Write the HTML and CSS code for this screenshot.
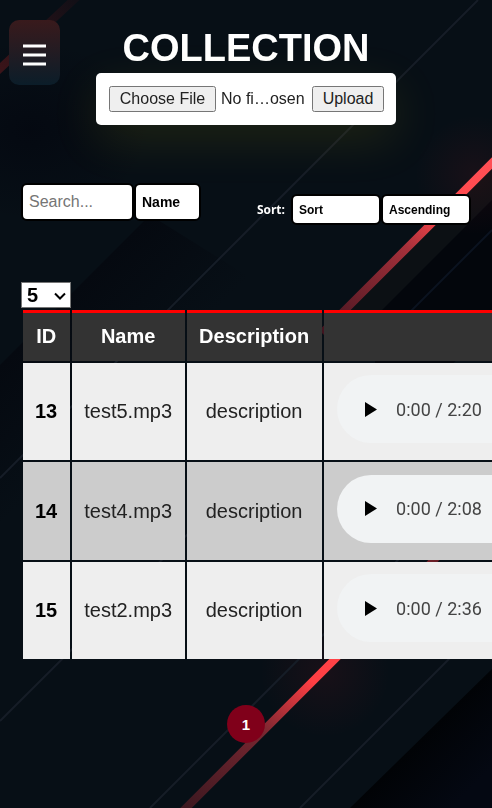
FILE: index.html
```html
<!DOCTYPE html>
<html lang="en">
<head>
<meta charset="utf-8">
<meta name="viewport" content="width=device-width, initial-scale=1">
<title>Collection</title>
<link rel="stylesheet" href="styles.css">
</head>
<body>
<svg class="backdrop" viewBox="0 0 492 808" preserveAspectRatio="xMidYMid slice" aria-hidden="true">
  <defs>
    <linearGradient id="beamTop" gradientUnits="userSpaceOnUse" x1="492" y1="163" x2="322" y2="333">
      <stop offset="0" stop-color="#ff4f55"/><stop offset=".3" stop-color="#ff474b"/><stop offset=".5" stop-color="#a5303a"/><stop offset="1" stop-color="#40141f"/>
    </linearGradient>
    <linearGradient id="beamLow" gradientUnits="userSpaceOnUse" x1="440" y1="554" x2="185" y2="809">
      <stop offset="0" stop-color="#5d1a22"/><stop offset=".35" stop-color="#ff4549"/><stop offset=".5" stop-color="#ff3e43"/><stop offset=".7" stop-color="#762630"/><stop offset="1" stop-color="#3c1820"/>
    </linearGradient>
    <linearGradient id="beamDim" gradientUnits="userSpaceOnUse" x1="0" y1="70" x2="75" y2="0">
      <stop offset="0" stop-color="#3b1419"/><stop offset="1" stop-color="#120f16"/>
    </linearGradient>
    <linearGradient id="shade" gradientUnits="userSpaceOnUse" x1="420" y1="740" x2="470" y2="790">
      <stop offset="0" stop-color="#010306"/><stop offset="1" stop-color="#040812"/>
    </linearGradient>
    <linearGradient id="shadeLeft" gradientUnits="userSpaceOnUse" x1="70" y1="295" x2="150" y2="375">
      <stop offset="0" stop-color="#050910"/><stop offset="1" stop-color="#070f16"/>
    </linearGradient>
    <radialGradient id="glow"><stop offset="0" stop-color="#ff2030" stop-opacity=".07"/><stop offset="1" stop-color="#ff2030" stop-opacity="0"/></radialGradient>
    <radialGradient id="dusk"><stop offset="0" stop-color="#03050e" stop-opacity=".6"/><stop offset="1" stop-color="#03050e" stop-opacity="0"/></radialGradient>
  </defs>
  <rect width="492" height="808" fill="#070f16"/>
  <ellipse cx="30" cy="130" rx="120" ry="90" fill="url(#dusk)"/>
  <path d="M150 215 0 365V560L270 290Z" fill="url(#shadeLeft)"/>
  <path d="M492 167 340 319h40L492 200Z" fill="#0c1014"/>
  <path d="M492 200 375 317V430L492 330Z" fill="#03060c"/>
  <path d="M492 669 350 808H492Z" fill="url(#shade)"/>
  <circle cx="475" cy="175" r="60" fill="url(#glow)"/>
  <circle cx="325" cy="672" r="65" fill="url(#glow)"/>
  <g stroke="#161d27" stroke-width="2">
    <path d="M478 0 0 478M230 492 0 721M470 488 150 808M600 508 300 808"/>
    <path d="M492 230 400 322" stroke="#0b1320"/>
  </g>
  <g fill="none" stroke-width="8">
    <path d="M500 155 322 333" stroke="url(#beamTop)"/>
    <path d="M440 554 180 814" stroke="url(#beamLow)"/>
    <path d="M-8 76 80-6" stroke="url(#beamDim)"/>
  </g>
</svg>

<button class="menu" type="button" aria-label="Menu">
  <svg class="menu-icon" viewBox="0 0 24 22" aria-hidden="true"><path d="M0 2h23M0 11h23M0 20h23" stroke="#fff" stroke-width="3"/></svg>
</button>

<header class="header">
  <h1 class="title">COLLECTION</h1>
  <form class="upload">
    <input class="upload-file" type="file" aria-label="Audio file">
    <button class="upload-send" type="button">Upload</button>
  </form>
</header>

<main class="content">
  <div class="toolbar">
    <div class="group">
      <input class="field search" type="text" placeholder="Search..." aria-label="Search">
      <select class="field search-by" aria-label="Search by"><option>Name</option></select>
    </div>
    <div class="group sorting">
      <label class="sort-label" for="sort">Sort:</label>
      <select class="field sort" id="sort"><option>Sort</option></select>
      <select class="field sort" aria-label="Sort direction"><option>Ascending</option></select>
    </div>
  </div>

  <div class="page-size">
    <select class="page-size-select" aria-label="Rows per page"><option>5</option></select>
    <svg class="chevron" viewBox="0 0 12 8" aria-hidden="true"><path d="M1 1.500 6 6.500l5-5" fill="none" stroke="#000" stroke-width="2"/></svg>
  </div>

  <div class="table-scroll">
    <table class="tracks">
      <thead>
        <tr><th>ID</th><th>Name</th><th>Description</th><th></th></tr>
      </thead>
      <tbody>
        <tr>
          <th scope="row">13</th><td>test5.mp3</td><td>description</td>
          <td><div class="player"><button class="play" type="button" aria-label="Play"><svg class="play-icon" viewBox="0 0 12 15"><path d="M0 0v15l12-7.500z"/></svg></button><span>0:00 / 2:20</span></div></td>
        </tr>
        <tr>
          <th scope="row">14</th><td>test4.mp3</td><td>description</td>
          <td><div class="player"><button class="play" type="button" aria-label="Play"><svg class="play-icon" viewBox="0 0 12 15"><path d="M0 0v15l12-7.500z"/></svg></button><span>0:00 / 2:08</span></div></td>
        </tr>
        <tr>
          <th scope="row">15</th><td>test2.mp3</td><td>description</td>
          <td><div class="player"><button class="play" type="button" aria-label="Play"><svg class="play-icon" viewBox="0 0 12 15"><path d="M0 0v15l12-7.500z"/></svg></button><span>0:00 / 2:36</span></div></td>
        </tr>
      </tbody>
    </table>
  </div>

  <nav class="pages" aria-label="Pages"><a class="page" href="#">1</a></nav>
</main>
</body>
</html>
```
FILE: styles.css
```css
* {
  box-sizing: border-box;
}

body {
  margin: 0;
  min-height: 100vh;
  background: #070f16;
  color: #000;
  font-family: "Liberation Sans", Arial, sans-serif;
  font-size: 20px;
}

.backdrop {
  position: fixed;
  inset: 0;
  z-index: -1;
  width: 100%;
  height: 100%;
}

.menu {
  position: absolute;
  top: 20px;
  left: 9px;
  display: grid;
  place-items: center;
  width: 51px;
  height: 65px;
  padding: 4px 0 0;
  border: 0;
  border-radius: 10px;
  background: linear-gradient(#391a1c, #0b1d29);
}

.menu-icon {
  width: 24px;
  height: 22px;
}

.header {
  display: flex;
  flex-direction: column;
  align-items: center;
  padding-top: 24px;
}

.title {
  margin: 0 0 1px;
  color: #fff;
  font-size: 38px;
  line-height: 48px;
}

.upload {
  display: flex;
  align-items: center;
  gap: 4px;
  height: 52px;
  padding: 0 12px 0 13px;
  border-radius: 5px;
  background: #fff;
  box-shadow: 0 15px 50px rgba(255, 225, 0, 0.1);
}

.upload-file,
.upload-send,
.upload-file::file-selector-button {
  color: #222;
  font-family: inherit;
  font-size: 16px;
}

.upload-file {
  width: 199px;
}

.upload-file::file-selector-button {
  width: 107px;
  height: 26px;
  margin-right: 5px;
}

.upload-send {
  width: 72px;
  height: 26px;
}

.content {
  padding: 58px 21px 0;
}

.toolbar {
  display: flex;
  justify-content: space-between;
  align-items: flex-start;
}

.group {
  display: flex;
  align-items: center;
}

.sorting {
  padding-top: 11px;
}

.field {
  appearance: none;
  height: 38px;
  padding: 0 6px;
  border: 2px solid #000;
  border-radius: 6px;
  background: #fff;
  color: #000;
  font-family: inherit;
  font-weight: bold;
}

.search {
  width: 113px;
  font-size: 16px;
  font-weight: normal;
}

.search-by {
  width: 67px;
  font-size: 14px;
}

.sort-label {
  margin-right: 6px;
  color: #fff;
  font-family: "Open Sans", sans-serif;
  font-size: 12px;
  font-weight: bold;
}

.sort {
  width: 90px;
  height: 31px;
  font-size: 12px;
}

.page-size {
  position: relative;
  width: 50px;
  margin-top: 57px;
}

.page-size-select {
  display: block;
  appearance: none;
  width: 100%;
  height: 26px;
  padding: 0 5px;
  border: 1px solid #767676;
  border-radius: 0;
  background: #fff;
  color: #000;
  font-family: inherit;
  font-size: 20px;
  font-weight: bold;
}

.chevron {
  position: absolute;
  top: 10px;
  right: 5px;
  width: 12px;
  height: 8px;
  pointer-events: none;
}

.table-scroll {
  margin-right: -21px;
  overflow-x: auto;
  scrollbar-width: none;
}

.tracks {
  border-collapse: separate;
  border-spacing: 2px;
  text-align: center;
  white-space: nowrap;
}

.tracks th,
.tracks td {
  padding: 12px 13px 12px 12px;
}

.tracks td:last-child {
  padding-left: 13px;
}

.tracks thead th {
  height: 51px;
  padding-top: 10px;
  border-top: 3px solid #f00;
  background: #333;
  color: #fff;
}

.tracks tbody tr {
  height: 97px;
  background: #eee;
}

.tracks tbody tr:nth-child(even) {
  height: 98px;
  background: #ccc;
}

.tracks tbody td {
  color: #222;
}

.player {
  display: flex;
  align-items: center;
  gap: 19px;
  width: 375px;
  height: 68px;
  margin-bottom: 5px;
  padding-left: 28px;
  border-radius: 34px;
  background: #f1f3f4;
  color: #444;
  font-family: Roboto, sans-serif;
  font-size: 18px;
}

.play {
  display: flex;
  padding: 0;
  border: 0;
  background: none;
}

.play-icon {
  width: 12px;
  height: 15px;
}

.pages {
  display: flex;
  justify-content: center;
  padding: 44px 0;
}

.page {
  display: grid;
  place-items: center;
  width: 38px;
  height: 38px;
  border-radius: 50%;
  background: #80001a;
  color: #fff;
  font-size: 15px;
  font-weight: bold;
  text-decoration: none;
}
```
